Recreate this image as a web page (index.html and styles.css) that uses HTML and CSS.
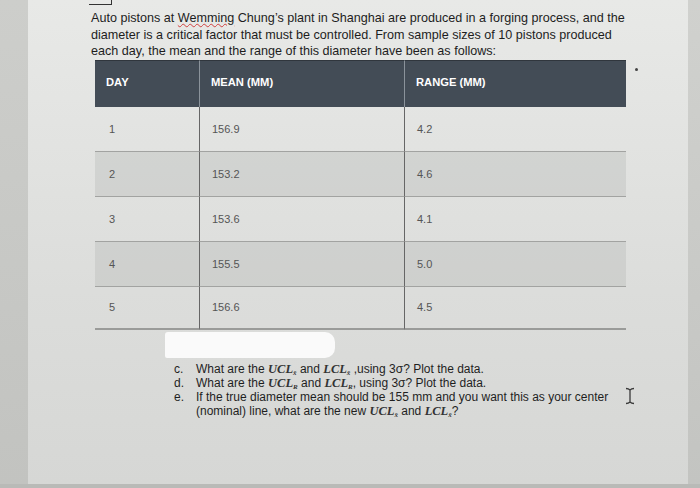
FILE: index.html
```html
<!DOCTYPE html>
<html>
<head>
<meta charset="utf-8">
<link rel="stylesheet" href="styles.css">
</head>
<body>
<div class="frame">
  <div class="edge-left"></div>
  <div class="main">
    <div class="sol"></div>
    <p class="intro">Auto pistons at <span class="spell">Wemming</span> Chung’s plant in Shanghai are produced in a forging process, and the diameter is a critical factor that must be controlled. From sample sizes of 10 pistons produced each day, the mean and the range of this diameter have been as follows:</p>
    <div class="table">
      <div class="th">DAY</div><div class="th">MEAN (MM)</div><div class="th">RANGE (MM)</div>
      <div class="td">1</div><div class="td">156.9</div><div class="td">4.2</div>
      <div class="td alt">2</div><div class="td alt">153.2</div><div class="td alt">4.6</div>
      <div class="td">3</div><div class="td">153.6</div><div class="td">4.1</div>
      <div class="td alt">4</div><div class="td alt">155.5</div><div class="td alt">5.0</div>
      <div class="td last">5</div><div class="td last">156.6</div><div class="td last">4.5</div>
    </div>
    <div class="redact"></div>
    <ol class="questions">
      <li><span class="mk">c.</span><span>What are the <i class="m">UCL<sub>x̄</sub></i> and <i class="m">LCL<sub>x̄</sub></i> ,using 3σ? Plot the data.</span></li>
      <li><span class="mk">d.</span><span>What are the <i class="m">UCL<sub>R</sub></i> and <i class="m">LCL<sub>R</sub></i>, using 3σ? Plot the data.</span></li>
      <li><span class="mk">e.</span><span>If the true diameter mean should be 155 mm and you want this as your center<br>(nominal) line, what are the new <i class="m">UCL<sub>x̄</sub></i> and <i class="m">LCL<sub>x̄</sub></i>?</span></li>
    </ol>
    <span class="dot"></span>
    <svg class="ibeam" width="12" height="18" viewBox="0 0 12 18"><path d="M2 1.5 Q4.5 1.5 6 3 Q7.5 1.5 10 1.5 M6 3 V15 M2 16.5 Q4.5 16.5 6 15 Q7.5 16.5 10 16.5" fill="none" stroke="#3a3a3a" stroke-width="1.3"/></svg>
  </div>
  <div class="edge-right"></div>
  <div class="edge-bottom"></div>
</div>
</body>
</html>
```
FILE: styles.css
```css
html, body {
  margin: 0;
  padding: 0;
}
body {
  width: 700px;
  height: 488px;
  overflow: hidden;
  font-family: "Liberation Sans", Arial, sans-serif;
}
.frame {
  display: grid;
  grid-template-columns: 28px 1fr 12px;
  grid-template-rows: 484px 4px;
  height: 488px;
  background: #cfd0cd;
}
.edge-left {
  background: linear-gradient(#cdcecb, #c2c3c0);
}
.edge-right {
  background: linear-gradient(#d0d1ce, #c3c4c1);
}
.edge-bottom {
  grid-column: 1 / 4;
  background: #b9bab7;
}
.main {
  position: relative;
  background: linear-gradient(#e8e9e7, #dcdddb 60%, #d6d7d5);
  padding-left: 63px;
}
.sol {
  width: 22px;
  height: 4px;
  border-right: 1.5px solid #333;
  border-bottom: 1.5px solid #333;
  margin-left: -2px;
}
.intro {
  margin: 5px 0 0;
  width: 540px;
  font-size: 12.6px;
  line-height: 16.5px;
  color: #1d1d1d;
}
.spell {
  display: inline-block;
  line-height: 14px;
  text-decoration: underline wavy #d04040;
  text-decoration-thickness: 1px;
}
.table {
  display: grid;
  grid-template-columns: 104px 205px 222px;
  width: 531px;
  margin: 0 0 0 4px;
}
.th {
  background: #434c56;
  color: #fff;
  font-size: 11.2px;
  font-weight: bold;
  height: 46px;
  line-height: 42px;
  padding-left: 11px;
  border-top: 1px solid #30363d;
}
.th + .th {
  border-left: 1px solid #8b939b;
}
.td {
  height: 45px;
  line-height: 45px;
  padding-left: 12px;
  font-size: 11px;
  color: #555;
  border-bottom: 1px solid #a2a3a1;
  box-sizing: border-box;
}
.td:nth-child(3n+2),
.td:nth-child(3n) {
  border-left: 1px solid #666;
}
.td:nth-child(3n+1) {
  padding-left: 14px;
}
.alt {
  background: rgba(180, 182, 180, 0.35);
}
.last {
  height: 43px;
  line-height: 40px;
  border-bottom: 2px solid #9a9b99;
}
.redact {
  width: 170px;
  height: 26px;
  margin: 2px 0 0 74px;
  background: #fafafa;
  border-radius: 3px 10px 10px 2px;
}
.questions {
  list-style: none;
  margin: 4px 0 0 83px;
  padding: 0;
  font-size: 12px;
  line-height: 14px;
  color: #1f1f1f;
}
.questions li {
  display: flex;
}
.mk {
  width: 22px;
  flex: none;
}
.m {
  font-family: "Liberation Serif", serif;
  font-size: 12.5px;
  font-weight: bold;
  color: #333;
  line-height: 0;
}
.m sub {
  font-size: 7px;
  line-height: 0;
  vertical-align: -2px;
}
.dot {
  position: absolute;
  left: 607px;
  top: 68px;
  width: 3px;
  height: 3px;
  border-radius: 50%;
  background: #444;
}
.ibeam {
  position: absolute;
  left: 596px;
  top: 387px;
}
```
